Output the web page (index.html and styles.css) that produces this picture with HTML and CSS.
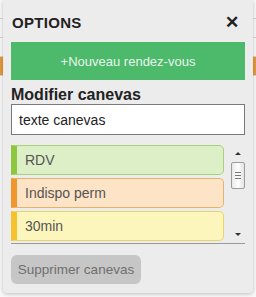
FILE: index.html
```html
<!DOCTYPE html>
<html>
<head>
    <title>Options</title>
    <link rel="stylesheet" href="styles.css">
</head>
<body>
    <div class="backdrop">
        <div class="row"></div>
        <div class="row"></div>
        <div class="row busy"></div>
        <div class="row"></div>
    </div>
    <div class="panel">
        <div class="header">
            <h2>OPTIONS</h2>
            <span class="close">&#x2715;</span>
        </div>
        <button class="btn-new">+Nouveau rendez-vous</button>
        <h3>Modifier canevas</h3>
        <input type="text" class="field" value="texte canevas">
        <div class="list">
            <div class="items">
                <div class="item green">RDV</div>
                <div class="item orange">Indispo perm</div>
                <div class="item yellow">30min</div>
                <div class="item red"></div>
            </div>
            <div class="scrollbar">
                <span class="arrow up"></span>
                <div class="thumb">
                    <span></span><span></span><span></span>
                </div>
                <span class="arrow down"></span>
            </div>
        </div>
        <button class="btn-delete">Supprimer canevas</button>
    </div>
</body>
</html>
```

FILE: styles.css
```css
* {
	box-sizing: border-box;
}

body {
	margin: 0;
	padding: 0;
	background-color: #fafafa;
	font-family: "Liberation Sans", Arial, sans-serif;
	width: 256px;
	height: 297px;
	overflow: hidden;
	position: relative;
}

.backdrop {
	padding-top: 18px;
}

.backdrop .row {
	height: 19px;
	border-top: 1px solid #d4d4d4;
}

.backdrop .busy {
	background-color: #e89a3c;
	height: 19px;
}

.panel {
	position: absolute;
	top: 0;
	left: 3px;
	width: 250px;
	height: 293px;
	background-color: #ececec;
	border-radius: 0 0 4px 4px;
	box-shadow: 0 1px 4px rgba(0, 0, 0, 0.25);
	padding: 0 8px;
	display: flex;
	flex-direction: column;
}

.header {
	display: flex;
	justify-content: space-between;
	align-items: center;
	height: 42px;
	padding-top: 2px;
}

h2 {
	margin: 0;
	font-size: 15px;
	font-weight: bold;
	color: #222;
	letter-spacing: 0.3px;
	padding-left: 1px;
}

.close {
	font-size: 17px;
	font-weight: bold;
	color: #222;
	margin-right: 6px;
}

.btn-new {
	flex: none;
	height: 38px;
	border: none;
	background-color: #4cb96b;
	color: #e8f5ec;
	font-family: "Liberation Sans", Arial, sans-serif;
	font-size: 13px;
	width: 100%;
	padding: 0;
}

h3 {
	margin: 6px 0 1px 0;
	font-size: 16px;
	font-weight: bold;
	color: #222;
	line-height: 17px;
}

.field {
	flex: none;
	height: 31px;
	width: 100%;
	border: 1px solid #7a7a7a;
	background-color: #fff;
	font-family: "Liberation Sans", Arial, sans-serif;
	font-size: 14px;
	color: #222;
	padding: 0 7px;
	margin: 0;
}

.list {
	flex: none;
	margin-top: 9px;
	height: 100px;
	display: flex;
	border-bottom: 1px solid #9a9a9a;
	overflow: hidden;
}

.items {
	width: 214px;
	display: flex;
	flex-direction: column;
	gap: 3px;
	padding-top: 1px;
}

.item {
	flex: none;
	height: 30px;
	line-height: 28px;
	border: 1px solid;
	border-left-width: 6px;
	border-radius: 0 5px 5px 0;
	padding-left: 8px;
	font-size: 14px;
	color: #555;
}

.green {
	background-color: #dcefc6;
	border-color: #a9d27a;
	border-left-color: #8dc63f;
}

.orange {
	background-color: #fde4c6;
	border-color: #e6b36c;
	border-left-color: #f0962c;
}

.yellow {
	background-color: #fcf5bc;
	border-color: #e8d56a;
	border-left-color: #f5c12e;
}

.red {
	background-color: #fde2e2;
	border-color: #e23a3a;
	border-left-color: #e23a3a;
}

.scrollbar {
	width: 14px;
	margin-left: 7px;
	display: flex;
	flex-direction: column;
	align-items: center;
	padding-top: 8px;
}

.arrow {
	width: 0;
	height: 0;
	border-left: 3px solid transparent;
	border-right: 3px solid transparent;
}

.arrow.up {
	border-bottom: 3px solid #333;
}

.arrow.down {
	border-top: 3px solid #333;
	margin-top: 44px;
}

.thumb {
	margin-top: 7px;
	width: 14px;
	height: 27px;
	border: 1px solid #9c9c9c;
	border-radius: 2px;
	background: linear-gradient(to right, #e8e8e8, #fdfdfd 50%, #e4e4e4);
	display: flex;
	flex-direction: column;
	justify-content: center;
	align-items: center;
	gap: 2px;
}

.thumb span {
	display: block;
	width: 6px;
	height: 1px;
	background-color: #777;
}

.btn-delete {
	flex: none;
	margin-top: 11px;
	width: 130px;
	height: 29px;
	border: none;
	border-radius: 6px;
	background-color: #c6c6c6;
	color: #6f6f6f;
	font-family: "Liberation Sans", Arial, sans-serif;
	font-size: 13.5px;
	padding: 0;
}
```
